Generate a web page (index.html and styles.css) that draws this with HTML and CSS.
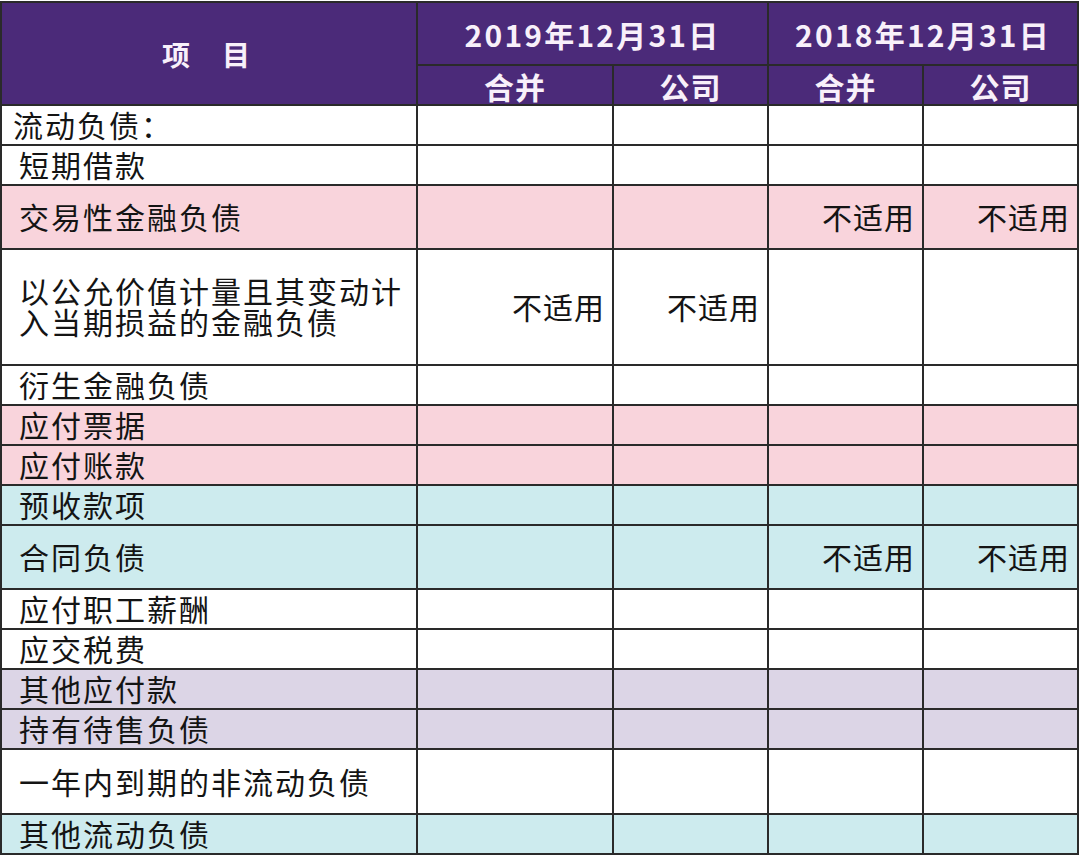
FILE: index.html
```html
<!DOCTYPE html>
<html lang="zh-CN">
<head>
<meta charset="utf-8">
<title>流动负债</title>
<link rel="stylesheet" href="styles.css">
</head>
<body>
<div class="sheet">
  <div class="c hd item">项　目</div>
  <div class="c hd date span2">2019年12月31日</div>
  <div class="c hd date span2">2018年12月31日</div>
  <div class="c hd sub">合并</div>
  <div class="c hd sub">公司</div>
  <div class="c hd sub">合并</div>
  <div class="c hd sub">公司</div>

  <div class="c name first">流动负债：</div><div class="c"></div><div class="c"></div><div class="c"></div><div class="c"></div>
  <div class="c name">短期借款</div><div class="c"></div><div class="c"></div><div class="c"></div><div class="c"></div>
  <div class="c name pink">交易性金融负债</div><div class="c pink"></div><div class="c pink"></div><div class="c pink num">不适用</div><div class="c pink num">不适用</div>
  <div class="c name multi"><span class="line">以公允价值计量且其变动计</span><span class="line">入当期损益的金融负债</span></div><div class="c num">不适用</div><div class="c num">不适用</div><div class="c"></div><div class="c"></div>
  <div class="c name">衍生金融负债</div><div class="c"></div><div class="c"></div><div class="c"></div><div class="c"></div>
  <div class="c name pink">应付票据</div><div class="c pink"></div><div class="c pink"></div><div class="c pink"></div><div class="c pink"></div>
  <div class="c name pink">应付账款</div><div class="c pink"></div><div class="c pink"></div><div class="c pink"></div><div class="c pink"></div>
  <div class="c name cyan">预收款项</div><div class="c cyan"></div><div class="c cyan"></div><div class="c cyan"></div><div class="c cyan"></div>
  <div class="c name cyan">合同负债</div><div class="c cyan"></div><div class="c cyan"></div><div class="c cyan num">不适用</div><div class="c cyan num">不适用</div>
  <div class="c name">应付职工薪酬</div><div class="c"></div><div class="c"></div><div class="c"></div><div class="c"></div>
  <div class="c name">应交税费</div><div class="c"></div><div class="c"></div><div class="c"></div><div class="c"></div>
  <div class="c name lav">其他应付款</div><div class="c lav"></div><div class="c lav"></div><div class="c lav"></div><div class="c lav"></div>
  <div class="c name lav">持有待售负债</div><div class="c lav"></div><div class="c lav"></div><div class="c lav"></div><div class="c lav"></div>
  <div class="c name">一年内到期的非流动负债</div><div class="c"></div><div class="c"></div><div class="c"></div><div class="c"></div>
  <div class="c name cyan">其他流动负债</div><div class="c cyan"></div><div class="c cyan"></div><div class="c cyan"></div><div class="c cyan"></div>
</div>
</body>
</html>
```

FILE: styles.css
```css
html, body {
  margin: 0;
  padding: 0;
  background: #ffffff;
}

body {
  font-family: "Noto Sans CJK SC", "Noto Sans", sans-serif;
  color: #141414;
  overflow: hidden;
}

.sheet {
  margin-top: 1px;
  display: grid;
  grid-template-columns: 416px 196px 155px 155px 155px;
  grid-template-rows: 63px 40px 40px 40px 64px 116px 40px 40px 40px 40px 64px 40px 40px 40px 40px 65px 40px;
  width: 1079px;
  box-sizing: border-box;
  border-left: 2px solid #2a2a2a;
  border-top: 2px solid #2a2a2a;
}

.c {
  box-sizing: border-box;
  border-right: 2px solid #2a2a2a;
  border-bottom: 2px solid #2a2a2a;
  display: flex;
  align-items: center;
  background: #ffffff;
  min-width: 0;
}

.hd {
  background: #4b2a79;
  color: #f8f0fa;
  font-weight: 700;
  justify-content: center;
}

.item {
  grid-row: span 2;
  font-size: 28px;
  letter-spacing: 2px;
  padding-right: 4px;
}

.span2 {
  grid-column: span 2;
}

.date {
  font-size: 30px;
  letter-spacing: 2.2px;
  padding-top: 1px;
}

.sub {
  font-size: 30px;
  letter-spacing: 1px;
  padding-top: 2px;
}

.name {
  font-size: 30px;
  letter-spacing: 2px;
  line-height: 32px;
  padding-left: 17px;
  padding-bottom: 2px;
}

.name.first {
  padding-left: 11px;
}

.multi {
  flex-direction: column;
  align-items: flex-start;
  justify-content: center;
  line-height: 31px;
}

.line {
  display: block;
  line-height: 31px;
}

.num {
  justify-content: flex-end;
  font-size: 30px;
  letter-spacing: 1px;
  padding-right: 7px;
  padding-bottom: 2px;
}

.pink { background: #f9d4dc; }
.cyan { background: #cdebee; }
.lav  { background: #dcd5e6; }
```
